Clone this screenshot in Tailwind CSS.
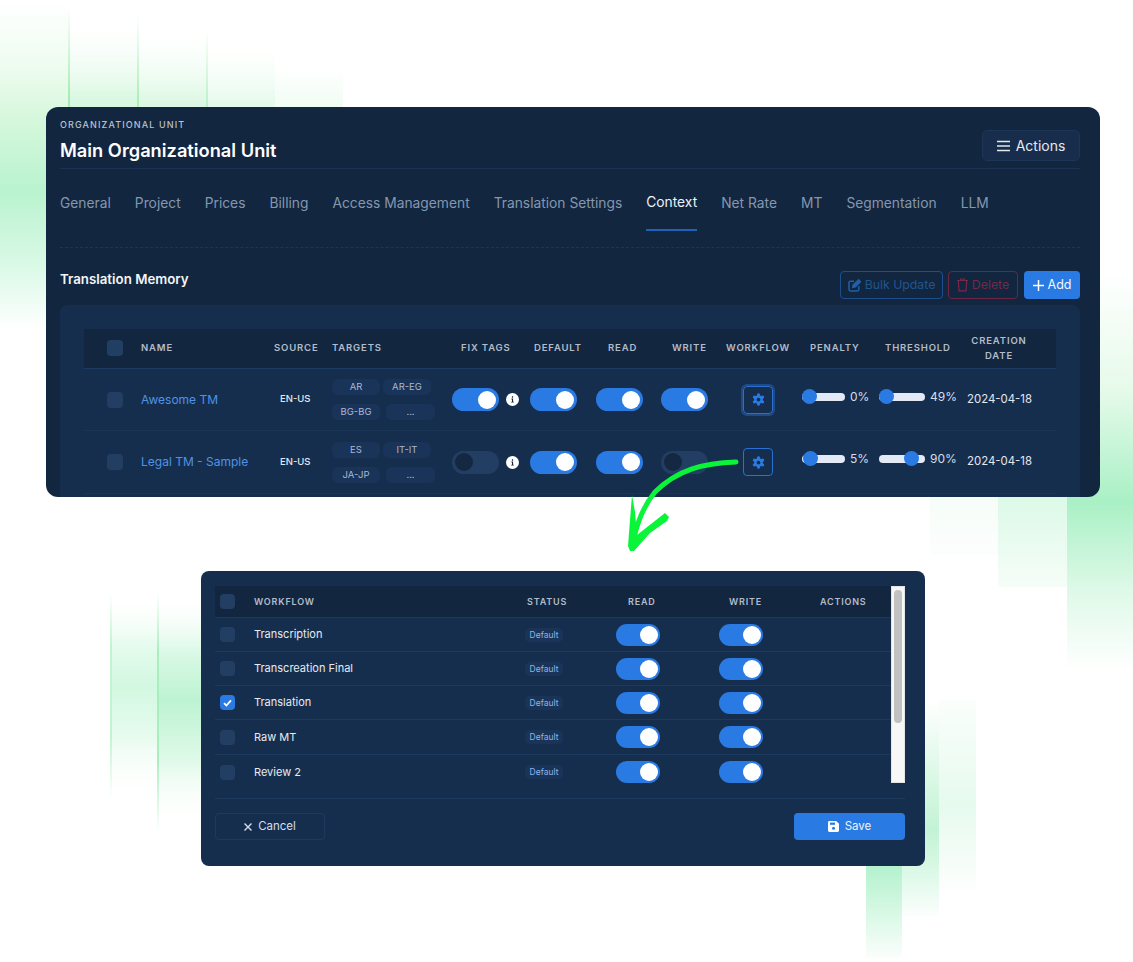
<!doctype html>
<html><head><meta charset="utf-8"><script src="https://cdn.jsdelivr.net/npm/@tailwindcss/browser@4"></script></head>
<body class="m-0 bg-white">
<div class="relative w-[1133px] h-[962px] overflow-hidden bg-white font-['Inter','Liberation_Sans',sans-serif]">

<!-- decorative green strips -->
<div class="absolute left-0 top-0 w-[68px] h-[330px] bg-[linear-gradient(180deg,#fff_0%,#eefcf0_20%,#d3f7da_38%,#b9f3cf_58%,#d9f9e6_80%,#fff_100%)]"></div>
<div class="absolute left-[68px] top-0 w-[69px] h-[108px] border-l-2 border-[#a5ecb4] bg-[linear-gradient(180deg,#fff_20%,#d6f7de_100%)] [mask-image:linear-gradient(180deg,transparent_5%,black_90%)]"></div>
<div class="absolute left-[137px] top-[10px] w-[69px] h-[98px] border-l-2 border-[#aeeebc] bg-[linear-gradient(180deg,#fff_20%,#dbf8e2_100%)] [mask-image:linear-gradient(180deg,transparent_5%,black_90%)]"></div>
<div class="absolute left-[206px] top-[25px] w-[69px] h-[83px] border-l-2 border-[#bff2cb] bg-[linear-gradient(180deg,#fff_20%,#e4faea_100%)] [mask-image:linear-gradient(180deg,transparent_5%,black_90%)]"></div>
<div class="absolute left-[275px] top-[68px] w-[68px] h-[40px] bg-[linear-gradient(180deg,#fff_0%,#f0fcf3_100%)]"></div>

<div class="absolute left-[1067px] top-[270px] w-[66px] h-[400px] bg-[linear-gradient(180deg,rgba(255,255,255,0)_0%,#e6faea_30%,#a9f0c5_58%,#def9e8_80%,rgba(255,255,255,0)_100%)]"></div>
<div class="absolute left-[998px] top-[497px] w-[69px] h-[90px] bg-[linear-gradient(180deg,#dcf9e7_0%,#f6fdf8_100%)]"></div>
<div class="absolute left-[930px] top-[497px] w-[68px] h-[58px] bg-[linear-gradient(180deg,#f6fdf8_0%,#fcfefd_100%)]"></div>

<div class="absolute left-[110px] top-[593px] w-[47px] h-[206px] border-l-2 border-[#c3f4d2] bg-[linear-gradient(180deg,#fff_0%,#d2f8e1_45%,#f4fdf7_85%,#fbfefc_100%)] [mask-image:linear-gradient(180deg,transparent_0%,black_25%,black_70%,transparent_100%)]"></div>
<div class="absolute left-[157px] top-[593px] w-[45px] h-[238px] border-l-2 border-[#a8eebf] bg-[linear-gradient(180deg,#fff_0%,#bdf3d2_45%,#f3fdf6_85%,#fff_100%)] [mask-image:linear-gradient(180deg,transparent_0%,black_25%,black_70%,transparent_100%)]"></div>

<div class="absolute left-[866px] top-[866px] w-[36px] h-[92px] bg-[linear-gradient(180deg,#b3f2cd_0%,#fbfefc_100%)]"></div>
<div class="absolute left-[902px] top-[700px] w-[37px] h-[216px] bg-[linear-gradient(180deg,#fff_0%,#c2f3d5_60%,#dcf9e7_80%,#fcfefd_100%)]"></div>
<div class="absolute left-[939px] top-[700px] w-[37px] h-[190px] bg-[linear-gradient(180deg,#fbfefc_0%,#e6faee_55%,#fdfefd_100%)]"></div>

<!-- arrow -->
<svg class="absolute left-0 top-0 z-20 pointer-events-none" width="1133" height="962" viewBox="0 0 1133 962" fill="none">
  <path d="M736 462 C 703 463 677 470 655 492 C 645 504 638 520 634 538" stroke="#0af539" stroke-width="5" stroke-linecap="round"/>
  <path d="M632 495 L635 512 L637 535 L665 513 L669 517 L667 521 L650 533 L634 551 L630 551 L628 546 L630 520 Z" fill="#0af539"/>
</svg>

<div class="relative z-10 pt-[107px]">
  <!-- top card -->
  <section class="ml-[46px] w-[1054px] h-[390px] rounded-xl overflow-hidden bg-[#13263f] flex flex-col pl-[14px] pr-[20px]">
    <header class="h-[62px] shrink-0 border-b border-[#1a3352] flex items-start justify-between">
      <div>
        <p class="mt-[12px] text-[9px] leading-[12px] font-medium tracking-[0.125em] text-[#b8c2cf]">ORGANIZATIONAL UNIT</p>
        <h1 class="mt-[6px] text-[18.25px] leading-[26px] font-semibold text-white">Main Organizational Unit</h1>
      </div>
      <button class="mt-[23px] w-[98px] h-[31px] rounded-[5px] border border-[#1d3657] bg-[#172d4b] flex items-center justify-center gap-[6px] text-[14px] text-[#e4e9f0]">
        <svg width="13" height="12" viewBox="0 0 13 12" fill="none" stroke="#e4e9f0" stroke-width="1.6"><path d="M0 1.5h13M0 6h13M0 10.5h13"/></svg>Actions
      </button>
    </header>
    <nav class="h-[79px] shrink-0 border-b border-dashed border-[#1e3553]">
      <ul class="flex gap-[24px] h-[62px] text-[13.8px] text-[#8497b0]">
        <li class="h-full flex items-center pt-[6px]">General</li>
        <li class="h-full flex items-center pt-[6px]">Project</li>
        <li class="h-full flex items-center pt-[6px]">Prices</li>
        <li class="h-full flex items-center pt-[6px]">Billing</li>
        <li class="h-full flex items-center pt-[6px]">Access Management</li>
        <li class="h-full flex items-center pt-[6px]">Translation Settings</li>
        <li class="h-full flex items-center pt-[6px] border-b-2 border-[#2060b8] text-[#eef2f7]">Context</li>
        <li class="h-full flex items-center pt-[6px]">Net Rate</li>
        <li class="h-full flex items-center pt-[6px]">MT</li>
        <li class="h-full flex items-center pt-[6px]">Segmentation</li>
        <li class="h-full flex items-center pt-[6px]">LLM</li>
      </ul>
    </nav>
    <div class="h-[57px] shrink-0 flex items-start justify-between">
      <h2 class="mt-[22px] text-[13.3px] leading-[18px] font-semibold text-[#f2f5f8]">Translation Memory</h2>
      <div class="mt-[23px] flex gap-[5px] text-[12.3px]">
        <button class="w-[103px] h-[28px] rounded-[4px] border border-[#1d4f8f] text-[#20558f] flex items-center justify-center gap-[4px]">
          <svg width="13" height="13" viewBox="0 0 13 13" fill="none" stroke="#2060a8" stroke-width="1.5"><path d="M6 2.2H2.4A1.4 1.4 0 0 0 1 3.6v7A1.4 1.4 0 0 0 2.4 12h7a1.4 1.4 0 0 0 1.4-1.4V7"/><path d="M4.8 8.2l.5-2.4L10.6.9l1.8 1.8-5.2 5-2.4.5z" fill="#2060a8"/></svg>Bulk Update
        </button>
        <button class="w-[70px] h-[28px] rounded-[4px] border border-[#6b2545] text-[#7a2645] flex items-center justify-center gap-[4px]">
          <svg width="11" height="14" viewBox="0 0 11 14" fill="none" stroke="#7a2645" stroke-width="1.2"><path d="M0 2.5h11M3.5 2.3V1h4v1.3M1.3 2.6l.7 10.2h7l.7-10.2"/></svg>Delete
        </button>
        <button class="ml-[1px] w-[56px] h-[28px] rounded-[4px] bg-[#2a7ae4] text-[#f4f7fb] flex items-center justify-center gap-[4px] text-[12.5px]">
          <svg width="11" height="11" viewBox="0 0 11 11" stroke="#fff" stroke-width="1.5"><path d="M5.5 0v11M0 5.5h11"/></svg>Add
        </button>
      </div>
    </div>
    <div class="flex-1 rounded-t-lg bg-[#162e4e] pt-[24px] px-[24px]">
      <!-- table -->
      <div class="grid grid-cols-[23px_34px_133px_58px_120px_78px_66px_65px_65px_76px_77px_88px_89px] h-[40px] pb-[1px] items-center bg-[#13263f] border-b border-[#1c3a63] text-[9.5px] font-semibold tracking-[0.09em] text-[#b2bdcb]">
        <span></span>
        <span class="w-[16px] h-[16px] rounded-[4px] bg-[#223f63]"></span>
        <span>NAME</span><span>SOURCE</span><span>TARGETS</span>
        <span class="pl-[9px]">FIX TAGS</span><span class="pl-[4px]">DEFAULT</span><span class="pl-[12px]">READ</span><span class="pl-[11px]">WRITE</span>
        <span>WORKFLOW</span><span class="pl-[8px]">PENALTY</span><span class="pl-[6px]">THRESHOLD</span>
        <span class="text-center leading-[15px] pr-[25px]">CREATION<br>DATE</span>
      </div>

      <div class="grid grid-cols-[23px_34px_133px_58px_120px_78px_66px_65px_65px_76px_77px_88px_89px] h-[62px] items-center border-b border-[#1a3556]">
        <span></span>
        <span class="w-[16px] h-[16px] rounded-[4px] bg-[#223f63]"></span>
        <a class="text-[12px] text-[#4f93e6]">Awesome TM</a>
        <span class="pl-[6px] text-[9.5px] font-medium text-[#e3e8ef]">EN-US</span>
        <div class="grid grid-cols-[48px_48px] gap-x-[3px] gap-y-[9px] text-[9.5px] text-[#a9bad0] text-center leading-[16px]">
          <span class="h-[16px] rounded-[6px] bg-[#1a3359]">AR</span><span class="h-[16px] rounded-[6px] bg-[#1a3359]">AR-EG</span>
          <span class="h-[16px] rounded-[6px] bg-[#1a3359]">BG-BG</span><span class="h-[16px] w-[49px] ml-[3px] rounded-[6px] bg-[#1a3359]">...</span>
        </div>
        <div class="flex items-center gap-[7px]">
          <span class="w-[47px] h-[23px] rounded-full bg-[#2a7ae4] flex items-center justify-end pr-[3px]"><i class="w-[18px] h-[18px] rounded-full bg-white"></i></span>
          <svg width="13" height="13" viewBox="0 0 13 13"><circle cx="6.5" cy="6.5" r="6.5" fill="#fff"/><path d="M5.4 5.6h1.7v3.1h.7v.9H5.2v-.9h.8V6.5h-.6zM5.9 3.3h1.2v1.4H5.9z" fill="#13263f"/></svg>
        </div>
        <span class="w-[47px] h-[23px] rounded-full bg-[#2a7ae4] flex items-center justify-end pr-[3px]"><i class="w-[18px] h-[18px] rounded-full bg-white"></i></span>
        <span class="w-[47px] h-[23px] rounded-full bg-[#2a7ae4] flex items-center justify-end pr-[3px]"><i class="w-[18px] h-[18px] rounded-full bg-white"></i></span>
        <span class="w-[47px] h-[23px] rounded-full bg-[#2a7ae4] flex items-center justify-end pr-[3px]"><i class="w-[18px] h-[18px] rounded-full bg-white"></i></span>
        <div class="pl-[17px]"><button class="w-[30px] h-[28px] rounded-[4px] border border-[#2a70d0] outline-2 outline-[#1f4a85] flex items-center justify-center">
          <svg width="15" height="15" viewBox="0 0 24 24"><path fill="#2a7ae4" d="M12.22 2h-.44a2 2 0 0 0-2 2v.18a2 2 0 0 1-1 1.73l-.43.25a2 2 0 0 1-2 0l-.15-.08a2 2 0 0 0-2.73.73l-.22.38a2 2 0 0 0 .73 2.73l.15.1a2 2 0 0 1 1 1.72v.51a2 2 0 0 1-1 1.74l-.15.09a2 2 0 0 0-.73 2.73l.22.38a2 2 0 0 0 2.73.73l.15-.08a2 2 0 0 1 2 0l.43.25a2 2 0 0 1 1 1.73V20a2 2 0 0 0 2 2h.44a2 2 0 0 0 2-2v-.18a2 2 0 0 1 1-1.73l.43-.25a2 2 0 0 1 2 0l.15.08a2 2 0 0 0 2.73-.73l.22-.39a2 2 0 0 0-.73-2.73l-.15-.08a2 2 0 0 1-1-1.74v-.5a2 2 0 0 1 1-1.74l.15-.09a2 2 0 0 0 .73-2.73l-.22-.38a2 2 0 0 0-2.73-.73l-.15.08a2 2 0 0 1-2 0l-.43-.25a2 2 0 0 1-1-1.73V4a2 2 0 0 0-2-2z"/><circle cx="12" cy="12" r="3" fill="#162e4e"/></svg>
        </button></div>
        <div class="flex items-center gap-[5px] mb-[6px] text-[12px] text-[#d5dde8]">
          <span class="relative w-[43px] h-[8px] rounded-full bg-[#e3e9f5]"><i class="absolute left-0 top-[-4px] w-[15px] h-[15px] rounded-full bg-[#2a7ae4]"></i></span>0%
        </div>
        <div class="flex items-center gap-[5px] mb-[6px] text-[12px] text-[#d5dde8]">
          <span class="relative w-[46px] h-[8px] rounded-full bg-[#e3e9f5]"><i class="absolute left-0 top-[-4px] w-[15px] h-[15px] rounded-full bg-[#2a7ae4]"></i></span>49%
        </div>
        <span class="text-[11.4px] text-[#e3e8ef]">2024-04-18</span>
      </div>

      <div class="grid grid-cols-[23px_34px_133px_58px_120px_78px_66px_65px_65px_76px_77px_88px_89px] h-[63px] items-center border-b border-[#1a3556]">
        <span></span>
        <span class="w-[16px] h-[16px] rounded-[4px] bg-[#223f63]"></span>
        <a class="text-[12px] text-[#4f93e6]">Legal TM - Sample</a>
        <span class="pl-[6px] text-[9.5px] font-medium text-[#e3e8ef]">EN-US</span>
        <div class="grid grid-cols-[48px_48px] gap-x-[3px] gap-y-[9px] text-[9.5px] text-[#a9bad0] text-center leading-[16px]">
          <span class="h-[16px] rounded-[6px] bg-[#1a3359]">ES</span><span class="h-[16px] rounded-[6px] bg-[#1a3359]">IT-IT</span>
          <span class="h-[16px] rounded-[6px] bg-[#1a3359]">JA-JP</span><span class="h-[16px] w-[49px] ml-[3px] rounded-[6px] bg-[#1a3359]">...</span>
        </div>
        <div class="flex items-center gap-[7px]">
          <span class="w-[47px] h-[23px] rounded-full bg-[#223f63] flex items-center pl-[3px]"><i class="w-[18px] h-[18px] rounded-full bg-[#142842]"></i></span>
          <svg width="13" height="13" viewBox="0 0 13 13"><circle cx="6.5" cy="6.5" r="6.5" fill="#fff"/><path d="M5.4 5.6h1.7v3.1h.7v.9H5.2v-.9h.8V6.5h-.6zM5.9 3.3h1.2v1.4H5.9z" fill="#13263f"/></svg>
        </div>
        <span class="w-[47px] h-[23px] rounded-full bg-[#2a7ae4] flex items-center justify-end pr-[3px]"><i class="w-[18px] h-[18px] rounded-full bg-white"></i></span>
        <span class="w-[47px] h-[23px] rounded-full bg-[#2a7ae4] flex items-center justify-end pr-[3px]"><i class="w-[18px] h-[18px] rounded-full bg-white"></i></span>
        <span class="w-[47px] h-[23px] rounded-full bg-[#223f63] flex items-center pl-[3px]"><i class="w-[18px] h-[18px] rounded-full bg-[#142842]"></i></span>
        <div class="pl-[17px]"><button class="w-[30px] h-[28px] rounded-[4px] border border-[#2a70d0] flex items-center justify-center">
          <svg width="15" height="15" viewBox="0 0 24 24"><path fill="#2a7ae4" d="M12.22 2h-.44a2 2 0 0 0-2 2v.18a2 2 0 0 1-1 1.73l-.43.25a2 2 0 0 1-2 0l-.15-.08a2 2 0 0 0-2.73.73l-.22.38a2 2 0 0 0 .73 2.73l.15.1a2 2 0 0 1 1 1.72v.51a2 2 0 0 1-1 1.74l-.15.09a2 2 0 0 0-.73 2.73l.22.38a2 2 0 0 0 2.73.73l.15-.08a2 2 0 0 1 2 0l.43.25a2 2 0 0 1 1 1.73V20a2 2 0 0 0 2 2h.44a2 2 0 0 0 2-2v-.18a2 2 0 0 1 1-1.73l.43-.25a2 2 0 0 1 2 0l.15.08a2 2 0 0 0 2.73-.73l.22-.39a2 2 0 0 0-.73-2.73l-.15-.08a2 2 0 0 1-1-1.74v-.5a2 2 0 0 1 1-1.74l.15-.09a2 2 0 0 0 .73-2.73l-.22-.38a2 2 0 0 0-2.73-.73l-.15.08a2 2 0 0 1-2 0l-.43-.25a2 2 0 0 1-1-1.73V4a2 2 0 0 0-2-2z"/><circle cx="12" cy="12" r="3" fill="#162e4e"/></svg>
        </button></div>
        <div class="flex items-center gap-[5px] mb-[6px] text-[12px] text-[#d5dde8]">
          <span class="relative w-[43px] h-[8px] rounded-full bg-[#e3e9f5]"><i class="absolute left-[1px] top-[-4px] w-[15px] h-[15px] rounded-full bg-[#2a7ae4]"></i></span>5%
        </div>
        <div class="flex items-center gap-[5px] mb-[6px] text-[12px] text-[#d5dde8]">
          <span class="relative w-[46px] h-[8px] rounded-full bg-[#e3e9f5]"><i class="absolute left-[25px] top-[-4px] w-[15px] h-[15px] rounded-full bg-[#2a7ae4]"></i></span>90%
        </div>
        <span class="text-[11.4px] text-[#e3e8ef]">2024-04-18</span>
      </div>
    </div>
  </section>

  <!-- workflow dialog -->
  <section class="mt-[74px] ml-[201px] w-[724px] h-[295px] rounded-lg bg-[#162e4e] px-[14px] pt-[15px] pr-[20px]">
    <div class="flex h-[197px] w-[690px]">
      <div class="w-[676px]">
        <div class="grid grid-cols-[39px_271px_91px_103px_101px_71px] h-[32px] items-center bg-[#13263f] border-b border-[#1c3a63] text-[9px] font-semibold tracking-[0.09em] text-[#b2bdcb]">
          <span class="ml-[5px] w-[15px] h-[15px] rounded-[4px] bg-[#223f63]"></span>
          <span>WORKFLOW</span><span class="pl-[2px]">STATUS</span><span class="pl-[12px]">READ</span><span class="pl-[10px]">WRITE</span><span>ACTIONS</span>
        </div>
        <div class="grid grid-cols-[39px_271px_91px_103px_101px_71px] h-[34px] items-center border-b border-[#1c3a5e]">
          <span class="ml-[5px] w-[15px] h-[15px] rounded-[4px] bg-[#223f63]"></span>
          <span class="text-[11px] text-[#e6ebf1]">Transcription</span>
          <span class="w-[38px] h-[14px] rounded-[5px] bg-[#1a3359] text-[8.5px] leading-[14px] text-center text-[#8eb4e8]">Default</span>
          <span class="w-[44px] h-[22px] rounded-full bg-[#2a7ae4] flex items-center justify-end pr-[2px]"><i class="w-[18px] h-[18px] rounded-full bg-white"></i></span>
          <span class="w-[44px] h-[22px] rounded-full bg-[#2a7ae4] flex items-center justify-end pr-[2px]"><i class="w-[18px] h-[18px] rounded-full bg-white"></i></span>
          <span></span>
        </div>
        <div class="grid grid-cols-[39px_271px_91px_103px_101px_71px] h-[34px] items-center border-b border-[#1c3a5e]">
          <span class="ml-[5px] w-[15px] h-[15px] rounded-[4px] bg-[#223f63]"></span>
          <span class="text-[11px] text-[#e6ebf1]">Transcreation Final</span>
          <span class="w-[38px] h-[14px] rounded-[5px] bg-[#1a3359] text-[8.5px] leading-[14px] text-center text-[#8eb4e8]">Default</span>
          <span class="w-[44px] h-[22px] rounded-full bg-[#2a7ae4] flex items-center justify-end pr-[2px]"><i class="w-[18px] h-[18px] rounded-full bg-white"></i></span>
          <span class="w-[44px] h-[22px] rounded-full bg-[#2a7ae4] flex items-center justify-end pr-[2px]"><i class="w-[18px] h-[18px] rounded-full bg-white"></i></span>
          <span></span>
        </div>
        <div class="grid grid-cols-[39px_271px_91px_103px_101px_71px] h-[34px] items-center border-b border-[#1c3a5e]">
          <span class="ml-[5px] w-[15px] h-[15px] rounded-[4px] bg-[#2a7ae4] flex items-center justify-center"><svg width="9" height="8" viewBox="0 0 9 8" fill="none" stroke="#fff" stroke-width="1.8"><path d="M1 4.2l2.4 2.3L8 1.3"/></svg></span>
          <span class="text-[11px] text-[#e6ebf1]">Translation</span>
          <span class="w-[38px] h-[14px] rounded-[5px] bg-[#1a3359] text-[8.5px] leading-[14px] text-center text-[#8eb4e8]">Default</span>
          <span class="w-[44px] h-[22px] rounded-full bg-[#2a7ae4] flex items-center justify-end pr-[2px]"><i class="w-[18px] h-[18px] rounded-full bg-white"></i></span>
          <span class="w-[44px] h-[22px] rounded-full bg-[#2a7ae4] flex items-center justify-end pr-[2px]"><i class="w-[18px] h-[18px] rounded-full bg-white"></i></span>
          <span></span>
        </div>
        <div class="grid grid-cols-[39px_271px_91px_103px_101px_71px] h-[35px] items-center border-b border-[#1c3a5e]">
          <span class="ml-[5px] w-[15px] h-[15px] rounded-[4px] bg-[#223f63]"></span>
          <span class="text-[11px] text-[#e6ebf1]">Raw MT</span>
          <span class="w-[38px] h-[14px] rounded-[5px] bg-[#1a3359] text-[8.5px] leading-[14px] text-center text-[#8eb4e8]">Default</span>
          <span class="w-[44px] h-[22px] rounded-full bg-[#2a7ae4] flex items-center justify-end pr-[2px]"><i class="w-[18px] h-[18px] rounded-full bg-white"></i></span>
          <span class="w-[44px] h-[22px] rounded-full bg-[#2a7ae4] flex items-center justify-end pr-[2px]"><i class="w-[18px] h-[18px] rounded-full bg-white"></i></span>
          <span></span>
        </div>
        <div class="grid grid-cols-[39px_271px_91px_103px_101px_71px] h-[34px] items-center">
          <span class="ml-[5px] w-[15px] h-[15px] rounded-[4px] bg-[#223f63]"></span>
          <span class="text-[11px] text-[#e6ebf1]">Review 2</span>
          <span class="w-[38px] h-[14px] rounded-[5px] bg-[#1a3359] text-[8.5px] leading-[14px] text-center text-[#8eb4e8]">Default</span>
          <span class="w-[44px] h-[22px] rounded-full bg-[#2a7ae4] flex items-center justify-end pr-[2px]"><i class="w-[18px] h-[18px] rounded-full bg-white"></i></span>
          <span class="w-[44px] h-[22px] rounded-full bg-[#2a7ae4] flex items-center justify-end pr-[2px]"><i class="w-[18px] h-[18px] rounded-full bg-white"></i></span>
          <span></span>
        </div>
      </div>
      <div class="w-[14px] h-[197px] bg-[#f7f7f7] border border-[#e4e4e4] pt-[3px] pl-[2px]">
        <div class="w-[8px] h-[133px] rounded-full bg-[#c1c1c1]"></div>
      </div>
    </div>
    <div class="mt-[15px] w-[690px] border-t border-[#1c3a5e] pt-[14px] flex justify-between">
      <button class="w-[110px] h-[27px] rounded-[4px] border border-[#1d3a5e] flex items-center justify-center gap-[6px] text-[11.5px] text-[#d5dde8]">
        <svg width="8" height="8" viewBox="0 0 8 8" stroke="#d5dde8" stroke-width="1.4"><path d="M.5.5l7 7M7.5.5l-7 7"/></svg>Cancel
      </button>
      <button class="w-[111px] h-[27px] rounded-[4px] bg-[#2a7ae4] flex items-center justify-center gap-[6px] text-[11.5px] text-[#eef3f9]">
        <svg width="11" height="11" viewBox="0 0 11 11"><path fill="#fff" d="M1.4 0h6.8L11 2.8v6.8A1.4 1.4 0 0 1 9.6 11H1.4A1.4 1.4 0 0 1 0 9.6V1.4A1.4 1.4 0 0 1 1.4 0z"/><path fill="#2a7ae4" d="M2 1.6h5v2.2H2z"/><circle cx="5.5" cy="7.3" r="1.5" fill="#2a7ae4"/></svg>Save
      </button>
    </div>
  </section>
</div>
</div>
</body></html>
